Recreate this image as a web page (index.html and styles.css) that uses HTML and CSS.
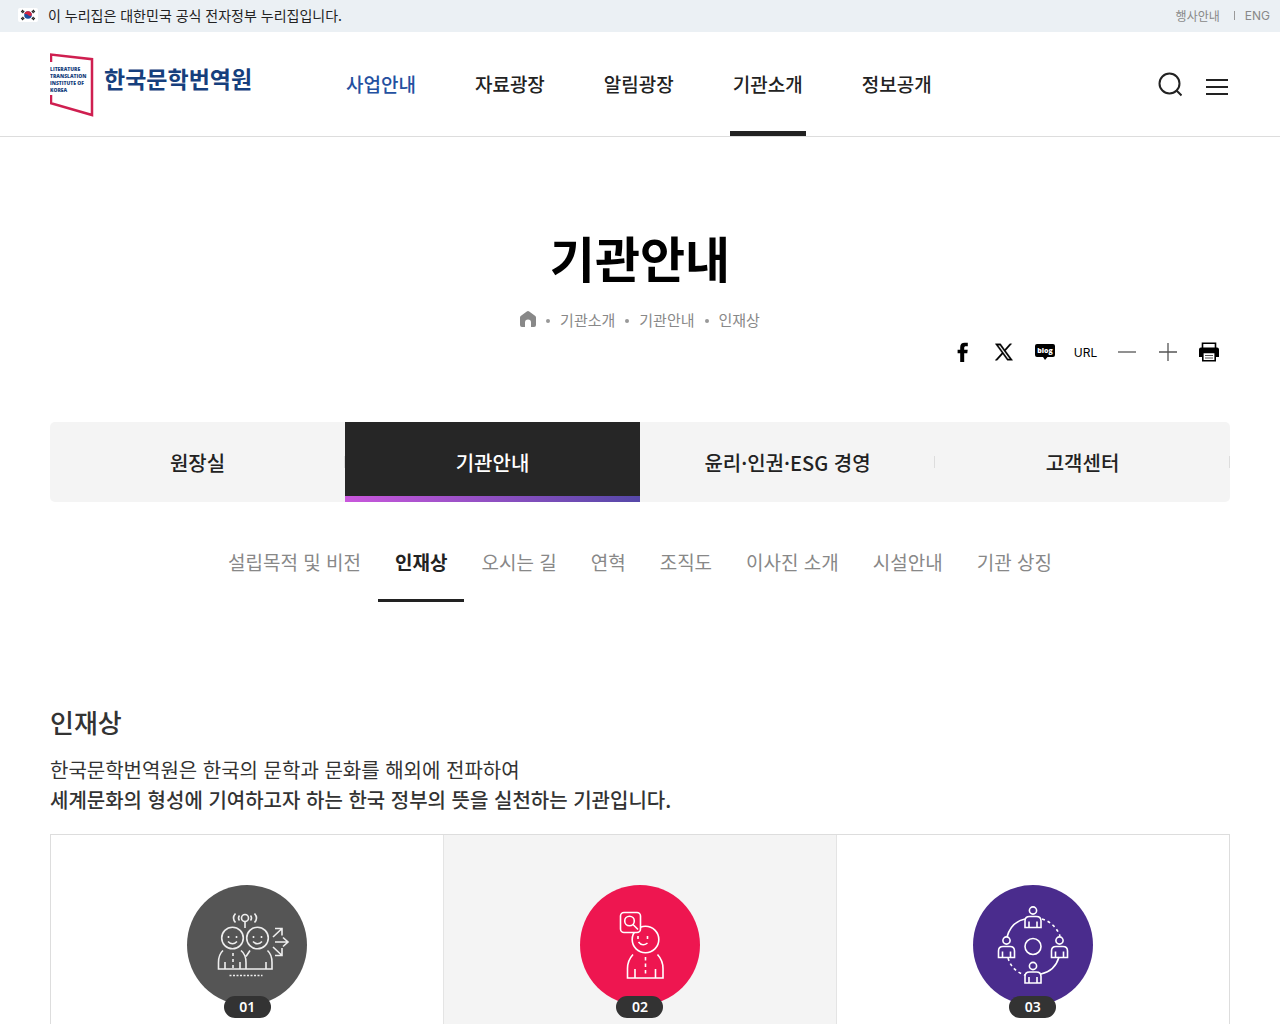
FILE: index.html
```html
<!DOCTYPE html>
<html lang="ko">
<head>
    <meta charset="UTF-8">
    <meta name="viewport" content="width=device-width, initial-scale=1.0">
    <title>인재상 | 한국문학번역원</title>
    <link rel="stylesheet" href="styles.css">
</head>
<body>
    <!-- 상단 안내 -->
    <div class="top-bar">
        <p class="gov">
            <svg class="flag" width="20" height="14" viewBox="0 0 20 14" aria-hidden="true">
                <rect width="20" height="14" rx="2" fill="#fff"/>
                <circle cx="10" cy="7" r="3.8" fill="#1c4fa0"/>
                <path d="M6.3 6.1a3.8 3.8 0 0 1 7.5.9c-.7 1.6-2.8 1.300-3.800 0-.9-1-2.700-1.300-3.700-.9z" fill="#d6243f"/>
                <path d="M3.2 4.2l1.800-2.200M4.400 5l1.800-2.200M15 2l1.800 2.200M13.800 2.800l1.800 2.200M3.200 9.800l1.800 2.200M4.400 9l1.800 2.200M15 12l1.800-2.200M13.800 11.200l1.800-2.200" stroke="#222" stroke-width="1.2"/>
            </svg>
            이 누리집은 대한민국 공식 전자정부 누리집입니다.
        </p>
        <div class="top-links">
            <a href="#">행사안내</a>
            <a href="#" class="eng">ENG</a>
        </div>
    </div>

    <header class="header">
        <a href="#" class="logo">
            <svg width="44" height="64" viewBox="0 0 44 64" role="img" aria-label="LTI Korea">
                <path d="M1 9V1.500L42 6.200V62L1 50.300V42" fill="none" stroke="#cf1f50" stroke-width="2.500"/>
                <g class="logo-small">
                    <text x="0" y="17.500">LITERATURE</text>
                    <text x="0" y="24.500">TRANSLATION</text>
                    <text x="0" y="31.500">INSTITUTE OF</text>
                    <text x="0" y="38.500">KOREA</text>
                </g>
            </svg>
            <span class="logo-name">한국문학번역원</span>
        </a>
        <nav class="gnb">
            <a href="#" class="point">사업안내</a>
            <a href="#">자료광장</a>
            <a href="#">알림광장</a>
            <a href="#" class="on">기관소개</a>
            <a href="#">정보공개</a>
        </nav>
        <div class="header-btns">
            <button type="button" aria-label="검색">
                <svg width="24" height="26" viewBox="0 0 24 26" fill="none" stroke="#222" stroke-width="2">
                    <circle cx="11.500" cy="12.500" r="10"/>
                    <path d="M18.500 19.500l5 5"/>
                </svg>
            </button>
            <button type="button" aria-label="전체메뉴">
                <svg width="22" height="26" viewBox="0 0 22 26" fill="none" stroke="#222" stroke-width="2">
                    <path d="M0 9h22M0 16h22M0 23h22"/>
                </svg>
            </button>
        </div>
    </header>

    <main class="container">
        <h1>기관안내</h1>
        <div class="breadcrumb">
            <a href="#" aria-label="홈">
                <svg width="16" height="18" viewBox="0 0 16 18" fill="#888">
                    <path d="M8 0a2 2 0 0 1 1.200.4l5.800 4.400a2 2 0 0 1 1 1.700V14a2 2 0 0 1-2 2h-3v-4.500a3 3 0 0 0-6 0V16H2a2 2 0 0 1-2-2V6.500a2 2 0 0 1 1-1.700L6.800.4A2 2 0 0 1 8 0z"/>
                </svg>
            </a>
            <a href="#">기관소개</a>
            <a href="#">기관안내</a>
            <a href="#">인재상</a>
        </div>

        <div class="tools">
            <button type="button" aria-label="페이스북">
                <svg width="12" height="20" viewBox="0 0 12 20"><path d="M3.200 20v-8.700H.6V7.700h2.600V5.200C3.200 2.200 4.800.8 7.600.8h3.200v3.400H8.900c-1.200 0-1.700.5-1.700 1.600v1.900h3.500l-.4 3.600H7.200V20z"/></svg>
            </button>
            <button type="button" aria-label="엑스">
                <svg width="18" height="18" viewBox="0 0 18 18"><path d="M.3.800h5.300l4.100 5.700L14.800.800h1.900l-6.100 6.900 7 9.600h-5.300L7.800 11l-5.600 6.300H.2l6.700-7.500zM3 2.200l10 13.700h1.900L4.900 2.200z" stroke="#000" stroke-width=".4"/></svg>
            </button>
            <button type="button" aria-label="블로그">
                <svg width="20" height="18" viewBox="0 0 20 18">
                    <path d="M2 1h16a2 2 0 0 1 2 2v9a2 2 0 0 1-2 2h-5.500L10 17l-2-3H2a2 2 0 0 1-2-2V3a2 2 0 0 1 2-2z"/>
                    <text class="blog-text" x="10" y="9.500" text-anchor="middle">blog</text>
                </svg>
            </button>
            <button type="button" class="url">URL</button>
            <button type="button" aria-label="축소">
                <svg width="18" height="18" viewBox="0 0 18 18"><path d="M0 9h18" stroke="#555" stroke-width="1.300"/></svg>
            </button>
            <button type="button" aria-label="확대">
                <svg width="18" height="18" viewBox="0 0 18 18"><path d="M0 9h18M9 0v18" stroke="#555" stroke-width="1.300"/></svg>
            </button>
            <button type="button" aria-label="인쇄">
                <svg width="20" height="20" viewBox="0 0 20 20">
                    <path d="M3.500 6V1.200h13V6" fill="none" stroke="#000" stroke-width="1.600"/>
                    <path d="M2 5.500h16a2 2 0 0 1 2 2V15h-3.500v-4h-13v4H0V7.500a2 2 0 0 1 2-2z"/>
                    <path d="M3.800 10.500h12.400v8.200H3.800z" fill="#fff" stroke="#000" stroke-width="1.600"/>
                    <path d="M6 13.500h8M6 16h8" stroke="#555"/>
                </svg>
            </button>
        </div>

        <nav class="tabs">
            <a href="#">원장실</a>
            <a href="#" class="on">기관안내</a>
            <a href="#">윤리·인권·ESG 경영</a>
            <a href="#">고객센터</a>
        </nav>

        <nav class="sub-tabs">
            <a href="#">설립목적 및 비전</a>
            <a href="#" class="on">인재상</a>
            <a href="#">오시는 길</a>
            <a href="#">연혁</a>
            <a href="#">조직도</a>
            <a href="#">이사진 소개</a>
            <a href="#">시설안내</a>
            <a href="#">기관 상징</a>
        </nav>

        <section>
            <h2>인재상</h2>
            <p class="intro">한국문학번역원은 한국의 문학과 문화를 해외에 전파하여<br>
                <strong>세계문화의 형성에 기여하고자 하는 한국 정부의 뜻을 실천하는 기관입니다.</strong></p>

            <ul class="cards">
                <li>
                    <svg class="circle" viewBox="0 0 120 120" aria-hidden="true">
                        <circle cx="60" cy="60" r="60" fill="#555"/>
                        <g fill="none" stroke="#eee" stroke-width="1.600">
                            <circle cx="45.500" cy="53" r="10.800"/>
                            <circle cx="70.500" cy="53" r="10.800"/>
                            <path d="M41.500 51v2M49.500 51v2M66.500 51v2M74.500 51v2M41 56.500q4.500 4.500 9 0M66 56.500q4.500 4.500 9 0"/>
                            <circle cx="58" cy="33" r="3.500"/>
                            <path d="M58 36.500V43M52.500 30.500q-2 2.500 0 5M48.500 28.500q-4 4.500 0 9M63.500 30.500q2 2.500 0 5M67.500 28.500q4 4.500 0 9"/>
                            <path d="M36 65.500q-4.500 4-4.500 12V84h53.500v-6.500q0-8-4.500-12M54 65.500q5 4 5 12V84M63 65.500l-4 6M38 77v7M53 77v7M79 77v7"/>
                            <path d="M46 68v15" stroke-dasharray="3 3"/>
                            <path d="M42.500 90.500h33" stroke-dasharray="2 1.500"/>
                            <path d="M86 52l8.500-8M88 43.500h7v7M88 57h12.500M96 52.500l5 4.500-5 4.500M86 62l8.500 8M95 63v7.500h-7"/>
                        </g>
                    </svg>
                    <span class="num">01</span>
                </li>
                <li class="shade">
                    <svg class="circle" viewBox="0 0 120 120" aria-hidden="true">
                        <circle cx="60" cy="60" r="60" fill="#ee1650"/>
                        <g fill="none" stroke="#fff" stroke-width="1.600">
                            <circle cx="65.500" cy="54.500" r="13.300"/>
                            <rect x="40.500" y="27.500" width="20" height="20" rx="3.500" fill="#ee1650"/>
                            <circle cx="49.500" cy="36" r="4.800"/>
                            <path d="M53 39.500l5 5"/>
                            <path d="M58 51v3M67.500 51v3M58.500 57q4 5 9 1"/>
                            <path d="M53 69.500q-5.500 6-5.500 14V93h35.500v-9.500q0-8-5.500-14M55 84v9M75.500 84v9"/>
                            <path d="M65.500 72v17" stroke-dasharray="3.500 3"/>
                        </g>
                    </svg>
                    <span class="num">02</span>
                </li>
                <li>
                    <svg class="circle" viewBox="0 0 120 120" aria-hidden="true">
                        <circle cx="60" cy="60" r="60" fill="#4a2c8d"/>
                        <g fill="none" stroke="#fff" stroke-width="1.600">
                            <circle cx="60" cy="61.500" r="8"/>
                            <path d="M34 52q4-15 18-18M68 89q14-3 18-17"/>
                            <path d="M69 34q13 4 18 17M35 73q4 13 17 17" stroke-dasharray="3 3"/>
                            <g id="person">
                                <circle cx="60" cy="25.500" r="3.600"/>
                                <path d="M52 42.500V36q0-4.500 4.500-4.500h7q4.500 0 4.500 4.500v6.500zM56 36.500v6M64 36.500v6"/>
                            </g>
                            <use href="#person" x="-26.500" y="30"/>
                            <use href="#person" x="26.500" y="30"/>
                            <use href="#person" y="55.500"/>
                        </g>
                    </svg>
                    <span class="num">03</span>
                </li>
            </ul>
        </section>
    </main>
</body>
</html>
```
FILE: styles.css
```css
* {
    box-sizing: border-box;
}
body {
    margin: 0;
    font-family: "Noto Sans CJK KR", sans-serif;
    color: #222;
    background: #fff;
}
h1, h2, p, ul {
    margin: 0;
    padding: 0;
}
a {
    color: inherit;
    text-decoration: none;
}
button {
    display: flex;
    align-items: center;
    justify-content: center;
    padding: 0;
    border: none;
    background: none;
    cursor: pointer;
}
svg {
    display: block;
}

/* top bar */
.top-bar {
    display: flex;
    justify-content: space-between;
    align-items: center;
    height: 32px;
    padding: 0 10px 2px 18px;
    background: #ebf0f4;
}
.gov {
    display: flex;
    align-items: center;
    gap: 10px;
    font-size: 14px;
}
.top-links {
    display: flex;
    align-items: center;
    font-size: 12px;
    color: #888;
}
.eng {
    margin-left: 14px;
    padding-left: 11px;
    background: linear-gradient(#999, #999) no-repeat left center / 1px 9px;
    font-family: Inter, sans-serif;
}

/* header */
.header {
    display: flex;
    height: 105px;
    padding: 0 50px;
    border-bottom: 1px solid #ddd;
}
.logo {
    display: flex;
    align-items: flex-start;
    gap: 10px;
    width: 293px;
    padding-top: 21px;
}
.logo-small {
    font-family: "Open Sans", sans-serif;
    font-size: 5px;
    font-weight: 800;
    fill: #163f7d;
}
.logo-name {
    font-size: 23px;
    line-height: 50px;
    font-weight: 700;
    color: #163f7d;
}
.gnb {
    display: flex;
    gap: 53px;
    flex: 1;
}
.gnb a {
    height: 104px;
    padding: 0 3px;
    border-bottom: 5px solid transparent;
    font-size: 19px;
    font-weight: 500;
    line-height: 104px;
}
.gnb .point {
    color: #2450a0;
}
.gnb .on {
    border-color: #222;
}
.header-btns {
    display: flex;
    align-items: center;
    gap: 24px;
    padding-right: 2px;
}

/* contents */
.container {
    padding: 93px 50px 0;
}
h1 {
    text-align: center;
    font-size: 49px;
    line-height: 54px;
    font-weight: 700;
    color: #000;
}
.breadcrumb {
    display: flex;
    align-items: center;
    justify-content: center;
    margin-top: 24px;
    font-size: 15px;
    line-height: 24px;
    color: #888;
}
.breadcrumb a + a::before {
    content: "";
    display: inline-block;
    width: 4px;
    height: 4px;
    margin: 0 10px 2px;
    border-radius: 50%;
    background: #999;
    vertical-align: middle;
}
.tools {
    display: flex;
    justify-content: flex-end;
    margin-top: 5px;
    padding-right: 1px;
}
.tools button {
    width: 41px;
    height: 30px;
}
.tools .url {
    font-family: Inter, sans-serif;
    font-size: 12px;
    color: #000;
}
.blog-text {
    font-family: "Open Sans", sans-serif;
    font-size: 7px;
    font-weight: 800;
    fill: #fff;
}

.tabs {
    display: grid;
    grid-template-columns: repeat(4, 1fr);
    margin-top: 55px;
    border-radius: 5px;
    background: #f4f4f4;
}
.tabs a {
    height: 80px;
    background: linear-gradient(#ddd, #ddd) no-repeat right center / 1px 12px;
    text-align: center;
    font-size: 20px;
    font-weight: 500;
    line-height: 82px;
}
.tabs .on {
    background: linear-gradient(90deg, #c957dc, #5548a8) no-repeat left bottom / 100% 6px #262626;
    color: #fff;
}
.sub-tabs {
    display: flex;
    justify-content: center;
    margin-top: 20px;
}
.sub-tabs a {
    height: 80px;
    padding: 0 17px;
    border-bottom: 3px solid transparent;
    font-size: 19px;
    line-height: 79px;
    color: #888;
}
.sub-tabs .on {
    border-color: #222;
    font-weight: 700;
    color: #222;
}

h2 {
    margin-top: 100px;
    font-size: 26px;
    line-height: 40px;
    font-weight: 500;
    color: #333;
}
.intro {
    margin-top: 13px;
    font-size: 20px;
    line-height: 30px;
    color: #333;
}
.intro strong {
    font-weight: 500;
}
.cards {
    display: grid;
    grid-template-columns: repeat(3, 1fr);
    margin-top: 19px;
    border: 1px solid #ddd;
    border-bottom: none;
    list-style: none;
}
.cards li {
    display: flex;
    flex-direction: column;
    align-items: center;
    padding: 50px 0 6px;
}
.cards .shade {
    margin: 0 -1px;
    border: 1px solid #e4e4e4;
    border-width: 0 1px;
    background: #f4f4f4;
}
.circle {
    width: 120px;
    height: 120px;
}
.num {
    z-index: 1;
    width: 47px;
    margin-top: -9px;
    border-radius: 11px;
    background: #333;
    text-align: center;
    font-family: "Noto Sans", sans-serif;
    font-size: 14px;
    font-weight: 600;
    line-height: 22px;
    color: #fff;
}
```
